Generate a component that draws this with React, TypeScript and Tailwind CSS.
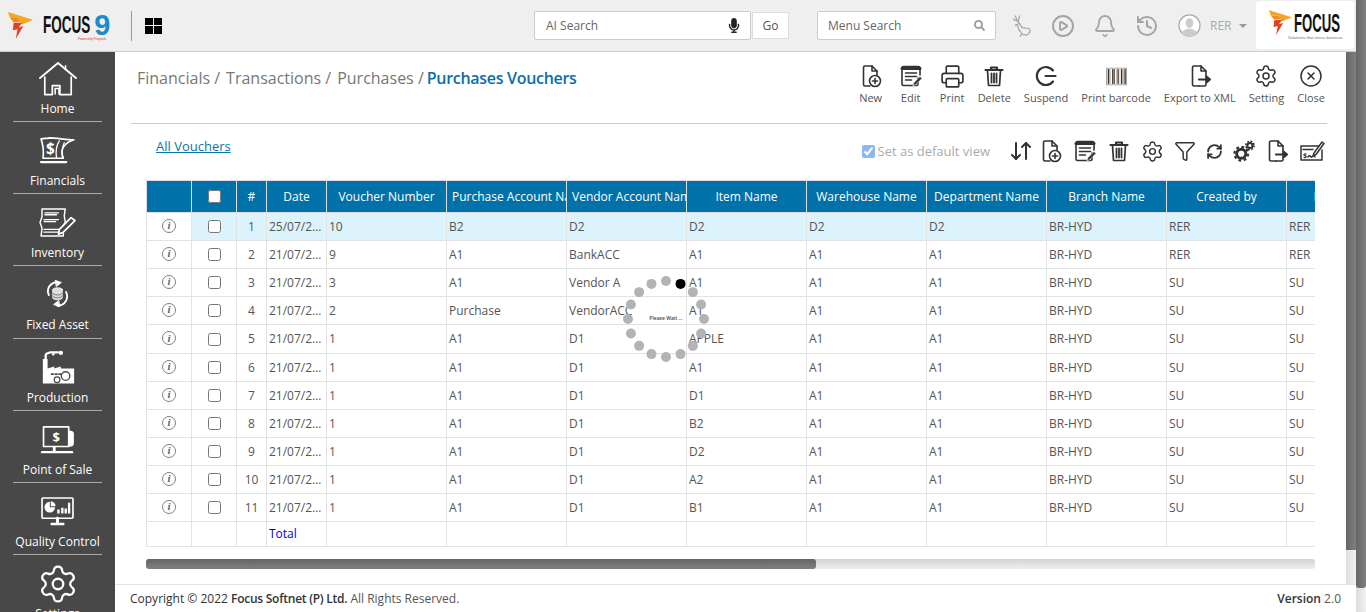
import React from 'react';
import { Printer, Settings, CircleX, Funnel, RefreshCw, ArrowDownUp, Bell, History, CirclePlay } from 'lucide-react';
import { FaMicrophone, FaSearch } from 'react-icons/fa';

type IconProps = { className?: string };

const FileBase: React.FC<{ children?: React.ReactNode }> = ({ children }) => (
  <svg viewBox="0 0 24 24" className="w-[24px] h-[24px]" fill="none" stroke="#333" strokeWidth="1.6" strokeLinejoin="round" strokeLinecap="round">
    <path d="M11 22H6a1.5 1.5 0 0 1-1.5-1.5v-17A1.5 1.5 0 0 1 6 2h7l5 5v5" />
    <path d="M13 2v5h5" />
    {children}
  </svg>
);

const NewIcon = () => (
  <FileBase>
    <circle cx="16" cy="17" r="5.5" fill="#fff" />
    <path d="M16 14.5v5M13.5 17h5" />
  </FileBase>
);

const ExportIcon = () => (
  <FileBase>
    <path d="M18 12v8.5a1.5 1.5 0 0 1-1.5 1.5H11" />
    <path d="M11 15.5h8M19 13v5l3-2.5z" strokeWidth="2.2" fill="#333" />
  </FileBase>
);

const EditIcon = () => (
  <svg viewBox="0 0 24 24" className="w-[24px] h-[24px]" fill="none" stroke="#333" strokeWidth="1.6" strokeLinecap="round" strokeLinejoin="round">
    <path d="M19 14v6a1.5 1.5 0 0 1-1.5 1.5h-13A1.5 1.5 0 0 1 3 20V4a1.5 1.5 0 0 1 1.5-1.5h15A1.5 1.5 0 0 1 21 4v7" />
    <path d="M3 4.500h18" strokeWidth="3" />
    <path d="M6.500 9h11M6.500 12.500h11M6.500 16h6" />
    <path d="M14 21.500l1-3 6-6 2 2-6 6z" fill="#333" stroke="#fff" strokeWidth="0.6" />
  </svg>
);

const TrashIcon = () => (
  <svg viewBox="0 0 24 24" className="w-[24px] h-[24px]" fill="none" stroke="#333" strokeWidth="1.7" strokeLinecap="round" strokeLinejoin="round">
    <path d="M3.500 6h17M9 5.500V3.500h6v2" strokeWidth="2.2" />
    <path d="M5.500 6.500l1 15h11l1-15" />
    <path d="M9.500 9.500v9M12 9.500v9M14.500 9.500v9" strokeWidth="1.8" />
  </svg>
);

const SuspendIcon = () => (
  <svg viewBox="0 0 24 24" className="w-[24px] h-[24px]" fill="none" stroke="#333" strokeWidth="2.2" strokeLinecap="round">
    <path d="M19 6.500A9 9 0 1 0 19 17.500" />
    <path d="M11.500 12h10" />
  </svg>
);

const BarcodeIcon = () => (
  <svg viewBox="0 0 24 20" className="w-[21px] h-[19px]" fill="none">
    <rect x="0.5" y="0.5" width="23" height="19" fill="#fff" stroke="#999" />
    {[2, 4, 7, 9, 12, 14, 17, 19, 21].map((x, i) => (
      <rect key={x} x={x} y="1.5" width={i % 2 ? 1 : 1.6} height="17" fill={i % 3 === 1 ? '#b27a45' : '#333'} />
    ))}
  </svg>
);

const ChequeIcon = () => (
  <svg viewBox="0 0 26 24" className="w-[26px] h-[24px]" fill="none" stroke="#333" strokeWidth="1.5" strokeLinecap="round" strokeLinejoin="round">
    <path d="M20 7H2v14h21V11" />
    <path d="M4 10.500h10" />
    <text x="4" y="19" fontSize="7" fontWeight="700" fill="#333" stroke="none" fontFamily="'Open Sans', sans-serif">$</text>
    <path d="M9 18c2-3 3 1 4 0s2-2 3 0" />
    <path d="M14 17l1-3 8-11 2 1.500-8 11z" fill="#fff" />
  </svg>
);

const GearsIcon = () => (
  <svg viewBox="0 0 24 24" className="w-[22px] h-[22px]" fill="none" stroke="#333">
    <circle cx="9" cy="15" r="5" strokeWidth="3.2" />
    <circle cx="9" cy="15" r="7.500" strokeWidth="2.400" strokeDasharray="3 2.890" />
    <circle cx="18.500" cy="6" r="2.800" strokeWidth="2.200" />
    <circle cx="18.500" cy="6" r="4.500" strokeWidth="1.800" strokeDasharray="2 1.530" />
  </svg>
);

const HomeIcon = ({ className }: IconProps) => (
  <svg viewBox="0 0 40 36" className={className} fill="none" stroke="#fff" strokeWidth="1.6" strokeLinecap="round" strokeLinejoin="round">
    <path d="M1 17L20 1l19 16" strokeWidth="2" />
    <path d="M28 8V4" />
    <path d="M6 16v18.500h8V25h8v9.500h12V16" strokeWidth="1.8" />
    <path d="M17 34v-6h4v6" />
  </svg>
);

const FinancialsIcon = ({ className }: IconProps) => (
  <svg viewBox="0 0 38 30" className={className} fill="none" stroke="#fff" strokeWidth="1.7" strokeLinecap="round" strokeLinejoin="round">
    <path d="M2 4c3-1 6 0 8-1 8 0 18 2 26 2-7 2-10 5-12 10-1 4 0 8 1 9H4C5 17 4 10 2 4z" />
    <path d="M21 6c-3 4-4 11-3 18M26 8c-2 4-3 10-1 16" strokeWidth="1.3" />
    <text x="7" y="20" fontSize="16" fontWeight="700" fill="#fff" stroke="none" fontFamily="'Open Sans', sans-serif">$</text>
    <path d="M2 28h26" strokeWidth="2.4" />
  </svg>
);

const InventoryIcon = ({ className }: IconProps) => (
  <svg viewBox="0 0 38 32" className={className} fill="none" stroke="#fff" strokeWidth="1.5" strokeLinecap="round" strokeLinejoin="round">
    <path d="M3 2h24l-1 7 1 7-2 3v11H2l1-8-2-6 2-6z" />
    <path d="M6 6h14M6 8h12M5 13h15M5 15h12M5 23h17M5 26h17" strokeWidth="1.3" />
    <path d="M20 28l1-5 12-12 4 3-12 12z" fill="#484848" strokeWidth="1.8" />
  </svg>
);

const FixedAssetIcon = ({ className }: IconProps) => (
  <svg viewBox="0 0 24 28" className={className} fill="none" stroke="#fff" strokeLinecap="round" strokeLinejoin="round">
    <path d="M3 15C0 9 4 2 12 1.500" strokeWidth="2" />
    <path d="M10 0l6 2-5 4zM14 27l-6-2 5-4z" fill="#fff" />
    <path d="M21 12c3 7-1 14-9 14.500" strokeWidth="2" />
    <ellipse cx="12" cy="9.500" rx="5" ry="2" fill="#ddd" strokeWidth="0.8" />
    <path d="M7 9.500v8.500c0 1 2 2 5 2s5-1 5-2V9.500" fill="#ddd" strokeWidth="0.8" />
    <path d="M7 13c0 1 2 2 5 2s5-1 5-2M7 16c0 1 2 2 5 2s5-1 5-2" stroke="#484848" strokeWidth="0.7" />
  </svg>
);

const ProductionIcon = ({ className }: IconProps) => (
  <svg viewBox="0 0 38 36" className={className} fill="none" stroke="#fff" strokeLinecap="round" strokeLinejoin="round">
    <path d="M3 35V9h5v10l7-2v2l7-2v2h14v16z" fill="#fff" stroke="none" />
    <path d="M6 9V5c0-2 3-2 5-3h8" strokeWidth="2.4" />
    <circle cx="22" cy="2.500" r="2.300" fill="#fff" stroke="none" />
    <circle cx="14" cy="4" r="1.300" fill="#fff" stroke="none" />
    <path d="M12 25h2M16 25h2M20 25h2" stroke="#484848" strokeWidth="1.6" />
    <circle cx="18" cy="31" r="3" stroke="#484848" strokeWidth="1.3" />
    <circle cx="27" cy="27" r="4.500" fill="#fff" stroke="#484848" strokeWidth="1.4" />
  </svg>
);

const PosIcon = ({ className }: IconProps) => (
  <svg viewBox="0 0 38 30" className={className} fill="none" stroke="#fff" strokeLinecap="round" strokeLinejoin="round">
    <path d="M27 5h6c1 0 3 1 3 3v11c0 2-2 3-3 3h-6z" fill="#fff" stroke="none" />
    <rect x="3.500" y="1" width="27" height="21" fill="#484848" strokeWidth="1.8" />
    <text x="13" y="17" fontSize="14" fontWeight="700" fill="#fff" stroke="none" fontFamily="'Open Sans', sans-serif">$</text>
    <path d="M15 23v4" strokeWidth="3" />
    <path d="M2 28h32" strokeWidth="2.6" />
  </svg>
);

const QualityIcon = ({ className }: IconProps) => (
  <svg viewBox="0 0 34 30" className={className} fill="none" stroke="#fff" strokeLinecap="round" strokeLinejoin="round">
    <rect x="1" y="1" width="32" height="21" rx="1" strokeWidth="1.7" />
    <path d="M9 5a5.500 5.500 0 1 0 5.500 5.500H9z" fill="#fff" stroke="none" />
    <path d="M10 4.500a5.500 5.500 0 0 1 5 5h-5z" fill="#fff" stroke="none" />
    <path d="M18 17v-4M22 17v-6M25.500 17v-5M29 17V6" strokeWidth="2.4" strokeLinecap="butt" />
    <path d="M17 22v4" strokeWidth="3" />
    <path d="M11 28h12" strokeWidth="2.600" />
  </svg>
);

const DeerIcon = () => (
  <svg viewBox="0 0 24 26" className="w-[20px] h-[24px]" fill="none" stroke="#a5a5a5" strokeWidth="1.500" strokeLinecap="round" strokeLinejoin="round">
    <path d="M4 1l2 5 3 4M2 5l4 2M9 1l-1 5-1 2" />
    <path d="M9 10l3 5 8 1c2 1 2 4 1 5l-3 3-5-1-2-2-3-4-1-4-3-1z" />
    <path d="M12 23l-2 2" />
  </svg>
);

const FocusFlame: React.FC<{ className?: string }> = ({ className }) => (
  <svg viewBox="0 0 26 28" className={className}>
    <path d="M0 0l26 8-11 5-5-7L2 6z" fill="#f5a623" />
    <path d="M2 6l8 0 3 4-7 1z" fill="#f08a1d" />
    <path d="M6 11.500l9-.5-4 5 5-1.500L8 28l2-10-5 1z" fill="#e0401f" />
  </svg>
);

const FocusLogo = () => (
  <div className="flex items-center w-[107px] h-[36px] relative">
    <FocusFlame className="w-[25px] h-[27px] shrink-0" />
    <svg viewBox="0 0 76 36" className="w-[76px] h-[36px] ml-[10px]">
      <text x="0" y="25" fontSize="25" fontWeight="700" fill="#111" textLength="50" lengthAdjust="spacingAndGlyphs" fontFamily="'Liberation Sans', sans-serif">FOCUS</text>
      <text x="54" y="27" fontSize="31" fontWeight="700" fill="#1b8bc9" textLength="17" lengthAdjust="spacingAndGlyphs" fontFamily="'Liberation Sans', sans-serif">9</text>
      <text x="37" y="33" fontSize="3" fill="#d33" fontFamily="'Liberation Sans', sans-serif">Powered by Pragmatic</text>
    </svg>
  </div>
);

const GridIcon = () => (
  <div className="grid grid-cols-2 gap-[1px] w-[17px] h-[16px]">
    <div className="bg-black" />
    <div className="bg-black" />
    <div className="bg-black" />
    <div className="bg-black" />
  </div>
);

const Avatar = () => (
  <svg viewBox="0 0 24 24" className="w-[23px] h-[23px]">
    <circle cx="12" cy="12" r="11" fill="#fff" stroke="#aaa" strokeWidth="1.300" />
    <ellipse cx="12" cy="9.500" rx="4" ry="5" fill="#ccc" />
    <path d="M4 20c1-4 5-4 8-5 3 1 7 1 8 5a11 11 0 0 1-16 0z" fill="#ccc" />
  </svg>
);

const Header = () => (
  <header className="h-[52px] shrink-0 flex items-center bg-[#efefef] border-b border-[#cccccc] pl-[8px]">
    <FocusLogo />
    <div className="w-px h-[30px] bg-[#999999] ml-[16px]" />
    <div className="ml-[13px]">
      <GridIcon />
    </div>
    <div className="ml-[372px] w-[217px] h-[29px] flex items-center justify-between bg-white border border-[#cccccc] rounded-[2px] pl-[11px] pr-[10px] text-[12px] text-[#666666]">
      <span>AI Search</span>
      <FaMicrophone className="w-[12px] h-[15px] text-[#222222]" />
    </div>
    <div className="ml-[1px] w-[37px] h-[27px] flex items-center justify-center bg-white border border-[#dddddd] text-[12px] text-[#555555]">Go</div>
    <div className="ml-[28px] w-[179px] h-[29px] flex items-center justify-between bg-white border border-[#cccccc] rounded-[2px] pl-[10px] pr-[10px] text-[12px] text-[#666666]">
      <span>Menu Search</span>
      <FaSearch className="w-[11px] h-[11px] text-[#999999]" />
    </div>
    <div className="ml-[16px] flex items-center gap-[19px] text-[#a5a5a5]">
      <DeerIcon />
      <CirclePlay className="w-[24px] h-[24px]" strokeWidth={2} />
      <Bell className="w-[24px] h-[24px] ml-[-1px]" strokeWidth={1.8} />
      <History className="w-[24px] h-[24px] ml-[-1px]" strokeWidth={2} />
      <Avatar />
    </div>
    <span className="ml-[9px] text-[12px] text-[#aaaaaa]">RER</span>
    <div className="ml-[8px] w-0 h-0 border-l-[4px] border-r-[4px] border-t-[4px] border-l-transparent border-r-transparent border-t-[#999999]" />
    <div className="ml-[9px] w-[98px] h-[48px] mb-[2px] flex flex-col items-center justify-center bg-white rounded-[3px]">
      <div className="flex items-center h-[26px]">
        <FocusFlame className="w-[23px] h-[25px] shrink-0" />
        <svg viewBox="0 0 48 24" className="w-[48px] h-[24px] ml-[2px]">
          <text x="0" y="21" fontSize="25" fontWeight="700" fill="#111" textLength="46" lengthAdjust="spacingAndGlyphs" fontFamily="'Liberation Sans', sans-serif">FOCUS</text>
        </svg>
      </div>
      <span className="text-[4px] leading-[4px] text-[#555555] ml-[20px] whitespace-nowrap">Solutions that move business</span>
    </div>
  </header>
);

const menu = [
  { label: 'Home', Icon: HomeIcon, cls: 'w-[38px] h-[34px] mt-[10px]', h: 'h-[70px]', mb: 'mb-[4px]' },
  { label: 'Financials', Icon: FinancialsIcon, cls: 'w-[37px] h-[29px] mt-[13px]', h: 'h-[72px]', mb: 'mb-[4px]' },
  { label: 'Inventory', Icon: InventoryIcon, cls: 'w-[37px] h-[31px] mt-[13px]', h: 'h-[72px]', mb: 'mb-[4px]' },
  { label: 'Fixed Asset', Icon: FixedAssetIcon, cls: 'w-[23px] h-[28px] mt-[14px]', h: 'h-[73px]', mb: 'mb-[5px]' },
  { label: 'Production', Icon: ProductionIcon, cls: 'w-[36px] h-[35px] mt-[11px]', h: 'h-[72px]', mb: 'mb-[4px]' },
  { label: 'Point of Sale', Icon: PosIcon, cls: 'w-[36px] h-[28px] mt-[15px]', h: 'h-[72px]', mb: 'mb-[4px]' },
  { label: 'Quality Control', Icon: QualityIcon, cls: 'w-[33px] h-[29px] mt-[14px]', h: 'h-[72px]', mb: 'mb-[4px]' },
];

const Sidebar = () => (
  <aside className="w-[115px] shrink-0 bg-[#484848] overflow-hidden flex flex-col">
    {menu.map(({ label, Icon, cls, h, mb }) => (
      <div key={label} className={`${h} shrink-0 mx-[13px] flex flex-col items-center border-b border-[#aaaaaa] text-white text-[12px] leading-[16px]`}>
        <div className="flex-1 min-h-0">
          <Icon className={cls} />
        </div>
        <span className={`${mb} whitespace-nowrap`}>{label}</span>
      </div>
    ))}
    <div className="shrink-0 flex flex-col items-center text-white text-[12px]">
      <Settings className="w-[42px] h-[42px] mt-[8px]" strokeWidth={1.3} />
      <span>Settings</span>
    </div>
  </aside>
);

const tools = [
  { label: 'New', icon: <NewIcon />, cls: '' },
  { label: 'Edit', icon: <EditIcon />, cls: 'ml-[16px]' },
  { label: 'Print', icon: <Printer className="w-[25px] h-[25px] text-[#333333]" strokeWidth={1.6} />, cls: 'ml-[17px]' },
  { label: 'Delete', icon: <TrashIcon />, cls: 'ml-[13px]' },
  { label: 'Suspend', icon: <SuspendIcon />, cls: 'ml-[13px]' },
  { label: 'Print barcode', icon: <BarcodeIcon />, cls: 'ml-[13px]' },
  { label: 'Export to XML', icon: <ExportIcon />, cls: 'ml-[13px]' },
  { label: 'Setting', icon: <Settings className="w-[24px] h-[24px] text-[#333333]" strokeWidth={1.5} />, cls: 'ml-[13px]' },
  { label: 'Close', icon: <CircleX className="w-[24px] h-[24px] text-[#333333]" strokeWidth={1.5} />, cls: 'ml-[13px]' },
];

const viewIcons = [
  <ArrowDownUp key="sort" className="w-[24px] h-[24px] mr-[-4px]" strokeWidth={2} />,
  <NewIcon key="new" />,
  <EditIcon key="edit" />,
  <TrashIcon key="trash" />,
  <Settings key="settings" className="w-[23px] h-[23px]" strokeWidth={1.5} />,
  <Funnel key="filter" className="w-[22px] h-[22px]" strokeWidth={1.6} />,
  <RefreshCw key="refresh" className="w-[17px] h-[17px]" strokeWidth={2.6} />,
  <GearsIcon key="cogs" />,
  <ExportIcon key="export" />,
  <ChequeIcon key="cheque" />,
];

const columns = [
  { label: '', w: 'w-[45px]' },
  { label: 'check', w: 'w-[45px]' },
  { label: '#', w: 'w-[30px]' },
  { label: 'Date', w: 'w-[60px]' },
  { label: 'Voucher Number', w: 'w-[120px]' },
  { label: 'Purchase Account Name', w: 'w-[120px]' },
  { label: 'Vendor Account Name', w: 'w-[120px]' },
  { label: 'Item Name', w: 'w-[120px]' },
  { label: 'Warehouse Name', w: 'w-[120px]' },
  { label: 'Department Name', w: 'w-[120px]' },
  { label: 'Branch Name', w: 'w-[120px]' },
  { label: 'Created by', w: 'w-[120px]' },
  { label: 'Modified by', w: 'w-[120px]' },
];

const rows = [
  ['25/07/2022', '10', 'B2', 'D2', 'D2', 'D2', 'D2', 'BR-HYD', 'RER', 'RER'],
  ['21/07/2022', '9', 'A1', 'BankACC', 'A1', 'A1', 'A1', 'BR-HYD', 'RER', 'RER'],
  ['21/07/2022', '3', 'A1', 'Vendor A', 'A1', 'A1', 'A1', 'BR-HYD', 'SU', 'SU'],
  ['21/07/2022', '2', 'Purchase', 'VendorACC', 'A1', 'A1', 'A1', 'BR-HYD', 'SU', 'SU'],
  ['21/07/2022', '1', 'A1', 'D1', 'APPLE', 'A1', 'A1', 'BR-HYD', 'SU', 'SU'],
  ['21/07/2022', '1', 'A1', 'D1', 'A1', 'A1', 'A1', 'BR-HYD', 'SU', 'SU'],
  ['21/07/2022', '1', 'A1', 'D1', 'D1', 'A1', 'A1', 'BR-HYD', 'SU', 'SU'],
  ['21/07/2022', '1', 'A1', 'D1', 'B2', 'A1', 'A1', 'BR-HYD', 'SU', 'SU'],
  ['21/07/2022', '1', 'A1', 'D1', 'D2', 'A1', 'A1', 'BR-HYD', 'SU', 'SU'],
  ['21/07/2022', '1', 'A1', 'D1', 'A2', 'A1', 'A1', 'BR-HYD', 'SU', 'SU'],
  ['21/07/2022', '1', 'A1', 'D1', 'B1', 'A1', 'A1', 'BR-HYD', 'SU', 'SU'],
];

const InfoIcon = () => (
  <div className="mx-auto mb-[2px] w-[14px] h-[14px] rounded-full border-[1.5px] border-[#808080] flex items-center justify-center text-[#666666] italic font-bold text-[11px] leading-none font-['Liberation_Serif',serif]">i</div>
);

const VoucherTable = () => (
  <div className="ml-[31px] w-[1169px] overflow-hidden shrink-0">
    <table className="table-fixed border-collapse w-[1260px] text-[12px] text-[#555555]">
      <thead>
        <tr className="h-[32px] bg-[#0071a9] text-white">
          {columns.map((c) => (
            <th key={c.label} className={`${c.w} border border-[#dddddd] font-normal px-[5px] text-center whitespace-nowrap overflow-hidden`}>
              {c.label === 'check' ? <input type="checkbox" readOnly className="block mx-auto" /> : c.label}
            </th>
          ))}
        </tr>
      </thead>
      <tbody>
        {rows.map((r, i) => (
          <tr key={i} className={i === 4 ? 'h-[29px]' : 'h-[28px]'}>
            <td className="border border-[#e2e2e2]"><InfoIcon /></td>
            <td className={`border border-[#e2e2e2] ${i === 0 ? 'bg-[#dcf3fb]' : ''}`}>
              <input type="checkbox" readOnly className="block mx-auto" />
            </td>
            <td className={`border border-[#e2e2e2] text-center ${i === 0 ? 'bg-[#dcf3fb]' : ''}`}>{i + 1}</td>
            {r.map((v, j) => (
              <td key={j} className={`border border-[#e2e2e2] pl-[2px] pr-[2px] whitespace-nowrap overflow-hidden ${j === 0 ? 'text-ellipsis' : ''} ${i === 0 ? 'bg-[#dcf3fb]' : ''}`}>{v}</td>
            ))}
          </tr>
        ))}
        <tr className="h-[25px]">
          <td className="border border-[#e2e2e2]" />
          <td className="border border-[#e2e2e2]" />
          <td className="border border-[#e2e2e2]" />
          <td className="border border-[#e2e2e2] px-[2px] text-[#0000ee]">Total</td>
          {rows[0].slice(1).map((_, j) => (
            <td key={j} className="border border-[#e2e2e2]" />
          ))}
        </tr>
      </tbody>
    </table>
  </div>
);

const Spinner = () => (
  <div className="absolute left-[619px] top-[272px] w-[94px] h-[94px] pointer-events-none">
    <svg viewBox="0 0 94 94" className="w-[94px] h-[94px]">
      {Array.from({ length: 16 }).map((_, i) => {
        const a = (i * Math.PI) / 8;
        return <circle key={i} cx={47 + 38 * Math.sin(a)} cy={47 - 38 * Math.cos(a)} r="5" fill={i === 1 ? '#000000' : '#b3b3b3'} />;
      })}
    </svg>
    <span className="absolute left-0 right-0 top-[43px] text-center text-[5px] leading-[6px] font-semibold text-[#444444] whitespace-nowrap">Please Wait ...</span>
  </div>
);

const Main = () => (
  <div className="flex-1 min-w-0 flex flex-col overflow-hidden bg-white">
    <div className="h-[71px] shrink-0 flex justify-between pl-[22px] pr-[21px]">
      <div className="pt-[14px] text-[16px] leading-[24px] text-[#777777] whitespace-nowrap">
        <span>Financials /</span>
        <span className="ml-[6px]">Transactions /</span>
        <span className="ml-[6px]">Purchases /</span>
        <span className="ml-[3px] font-semibold tracking-[-0.3px] text-[#0a6ea8]">Purchases Vouchers</span>
      </div>
      <div className="flex items-start pt-[11px]">
        {tools.map((t) => (
          <div key={t.label} className={`${t.cls} flex flex-col items-center text-[11px] leading-[16px] text-[#555555] whitespace-nowrap`}>
            <div className="h-[26px] flex items-center justify-center">{t.icon}</div>
            <span className="mt-[1px]">{t.label}</span>
          </div>
        ))}
      </div>
    </div>
    <div className="h-px shrink-0 bg-[#cccccc] ml-[16px] w-[1196px]" />
    <div className="h-[56px] shrink-0 flex justify-between pl-[41px] pr-[21px]">
      <a className="mt-[13px] text-[13px] leading-[18px] text-[#0a76ac] underline">All Vouchers</a>
      <div className="flex items-center h-[24px] mt-[15px] text-[#333333]">
        <input type="checkbox" checked readOnly className="w-[13px] h-[13px] opacity-50 accent-[#1a73e8]" />
        <span className="ml-[3px] mr-[19px] mt-[1px] text-[13px] text-[#aaaaaa]">Set as default view</span>
        <div className="flex items-center gap-[10px]">{viewIcons}</div>
      </div>
    </div>
    <VoucherTable />
    <div className="ml-[31px] mt-[12px] w-[1169px] h-[10px] shrink-0 rounded-[3px] bg-gradient-to-b from-[#d4d4d4] to-[#eeeeee]">
      <div className="w-[670px] h-[10px] rounded-[3px] bg-gradient-to-b from-[#666666] to-[#808080]" />
    </div>
    <div className="mt-[15px] ml-[31px] w-[1169px] h-[10px] shrink-0 flex">
      <div className="ml-[25px] w-[169px] border-t border-[#dddddd]" />
      <div className="ml-[31px] w-[169px] border-t border-[#dddddd]" />
      <div className="ml-[495px] w-[45px] border-t border-[#dddddd]" />
      <div className="ml-[5px] w-[70px] border-t border-[#dddddd]" />
      <div className="ml-[9px] w-[29px] border-t border-[#dddddd]" />
      <div className="ml-[9px] w-[48px] border-t border-[#dddddd]" />
      <div className="ml-[10px] w-[45px] border-t border-[#dddddd]" />
    </div>
  </div>
);

const App: React.FC = () => (
  <div className="relative w-[1366px] h-[612px] flex overflow-hidden bg-white font-['Open_Sans',sans-serif]">
    <div className="w-[1356px] flex flex-col">
      <Header />
      <div className="flex-1 min-h-0 flex">
        <Sidebar />
        <div className="flex-1 min-w-0 flex flex-col">
          <div className="flex-1 min-h-0 flex">
            <Main />
            <div className="w-[10px] shrink-0 flex flex-col bg-gradient-to-r from-[#dddddd] to-[#f0f0f0]">
              <div className="h-[498px] bg-gradient-to-r from-[#666666] to-[#808080]" />
            </div>
          </div>
          <footer className="h-[28px] shrink-0 flex items-center justify-between bg-white border-t border-[#e5e5e5] pl-[15px] pr-[15px] text-[12px] text-[#555555]">
            <span className="text-[#333333]">Copyright © 2022 <b className="font-semibold tracking-[-0.25px]">Focus Softnet (P) Ltd.</b> <span className="text-[#555555]">All Rights Reserved.</span></span>
            <span><b className="font-semibold text-[#333333]">Version</b> 2.0</span>
          </footer>
        </div>
      </div>
    </div>
    <div className="w-[10px] shrink-0 flex flex-col bg-gradient-to-r from-[#dddddd] to-[#f0f0f0]">
      <div className="h-[588px] rounded-b-[3px] bg-gradient-to-r from-[#666666] to-[#808080]" />
    </div>
    <Spinner />
  </div>
);

export default App;
